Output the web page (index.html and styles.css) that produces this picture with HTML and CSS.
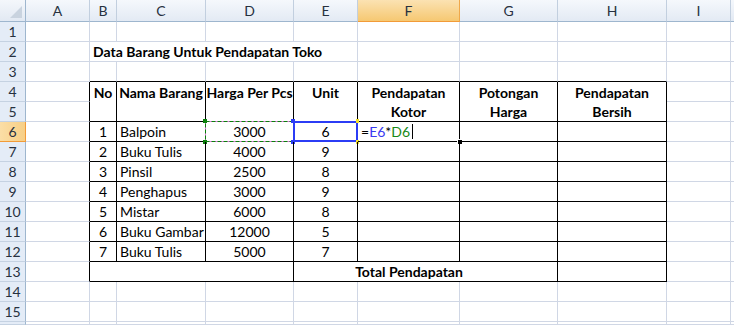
FILE: index.html
```html
<!doctype html>
<html lang="id">
<head>
<meta charset="utf-8">
<title>Data Barang Untuk Pendapatan Toko</title>
<link rel="stylesheet" href="styles.css">
</head>
<body>
<div class="sheet">
	<!-- header kolom -->
	<div class="corner"><span class="tri"></span></div>
	<div class="h">A</div><div class="h">B</div><div class="h">C</div><div class="h">D</div><div class="h">E</div>
	<div class="h sel">F</div><div class="h">G</div><div class="h">H</div><div class="h">I</div><div class="h last"></div>

	<!-- 1 -->
	<div class="rh">1</div>
	<div class="c"></div><div class="c"></div><div class="c"></div><div class="c"></div><div class="c"></div>
	<div class="c"></div><div class="c"></div><div class="c"></div><div class="c"></div><div class="c nr"></div>

	<!-- 2 -->
	<div class="rh">2</div>
	<div class="c"></div><div class="c nr b">Data Barang Untuk Pendapatan Toko</div><div class="c nr"></div><div class="c nr"></div><div class="c"></div>
	<div class="c"></div><div class="c"></div><div class="c"></div><div class="c"></div><div class="c nr"></div>

	<!-- 3 -->
	<div class="rh">3</div>
	<div class="c"></div><div class="c B"></div><div class="c B"></div><div class="c B"></div><div class="c B"></div>
	<div class="c B"></div><div class="c B"></div><div class="c B"></div><div class="c"></div><div class="c nr"></div>

	<!-- 4 -->
	<div class="rh">4</div>
	<div class="c R"></div>
	<div class="c R nb ctr b">No</div>
	<div class="c R nb ctr b">Nama Barang</div>
	<div class="c R nb ctr b">Harga Per Pcs</div>
	<div class="c R nb ctr b">Unit</div>
	<div class="c R nb ctr b">Pendapatan</div>
	<div class="c R nb ctr b">Potongan</div>
	<div class="c R nb ctr b">Pendapatan</div>
	<div class="c"></div><div class="c nr"></div>

	<!-- 5 -->
	<div class="rh">5</div>
	<div class="c R"></div>
	<div class="c R B"></div><div class="c R B"></div><div class="c R B"></div><div class="c R B"></div>
	<div class="c R B ctr b">Kotor</div>
	<div class="c R B ctr b">Harga</div>
	<div class="c R B ctr b">Bersih</div>
	<div class="c"></div><div class="c nr"></div>

	<!-- 6 -->
	<div class="rh sel">6</div>
	<div class="c R"></div>
	<div class="c R B ctr">1</div>
	<div class="c R B">Balpoin</div>
	<div class="c R B ctr">3000
		<svg class="ants" width="89" height="21"><rect x="0.5" y="0.5" width="88" height="20" fill="none" stroke="#e070e0"/><rect x="0.5" y="0.5" width="88" height="20" fill="none" stroke="#0a800a" stroke-dasharray="4 2"/></svg>
		<span class="hd green tl"></span><span class="hd green bl"></span>
	</div>
	<div class="c R B ctr">6
		<span class="ref"></span>
		<span class="hd blue tl"></span><span class="hd blue bl"></span>
		<span class="hd yellow tr"></span><span class="hd yellow br"></span>
	</div>
	<div class="c R B"><span>=</span><span class="fe">E6</span><span>*</span><span class="fd">D6</span><span class="caret"></span>
		<span class="fill"></span>
	</div>
	<div class="c R B"></div>
	<div class="c R B"></div>
	<div class="c"></div><div class="c nr"></div>

	<!-- 7 -->
	<div class="rh">7</div>
	<div class="c R"></div>
	<div class="c R B ctr">2</div><div class="c R B">Buku Tulis</div><div class="c R B ctr">4000</div><div class="c R B ctr">9</div>
	<div class="c R B"></div><div class="c R B"></div><div class="c R B"></div>
	<div class="c"></div><div class="c nr"></div>

	<!-- 8 -->
	<div class="rh">8</div>
	<div class="c R"></div>
	<div class="c R B ctr">3</div><div class="c R B">Pinsil</div><div class="c R B ctr">2500</div><div class="c R B ctr">8</div>
	<div class="c R B"></div><div class="c R B"></div><div class="c R B"></div>
	<div class="c"></div><div class="c nr"></div>

	<!-- 9 -->
	<div class="rh">9</div>
	<div class="c R"></div>
	<div class="c R B ctr">4</div><div class="c R B">Penghapus</div><div class="c R B ctr">3000</div><div class="c R B ctr">9</div>
	<div class="c R B"></div><div class="c R B"></div><div class="c R B"></div>
	<div class="c"></div><div class="c nr"></div>

	<!-- 10 -->
	<div class="rh">10</div>
	<div class="c R"></div>
	<div class="c R B ctr">5</div><div class="c R B">Mistar</div><div class="c R B ctr">6000</div><div class="c R B ctr">8</div>
	<div class="c R B"></div><div class="c R B"></div><div class="c R B"></div>
	<div class="c"></div><div class="c nr"></div>

	<!-- 11 -->
	<div class="rh">11</div>
	<div class="c R"></div>
	<div class="c R B ctr">6</div><div class="c R B">Buku Gambar</div><div class="c R B ctr">12000</div><div class="c R B ctr">5</div>
	<div class="c R B"></div><div class="c R B"></div><div class="c R B"></div>
	<div class="c"></div><div class="c nr"></div>

	<!-- 12 -->
	<div class="rh">12</div>
	<div class="c R"></div>
	<div class="c R B ctr">7</div><div class="c R B">Buku Tulis</div><div class="c R B ctr">5000</div><div class="c R B ctr">7</div>
	<div class="c R B"></div><div class="c R B"></div><div class="c R B"></div>
	<div class="c"></div><div class="c nr"></div>

	<!-- 13 -->
	<div class="rh">13</div>
	<div class="c R"></div>
	<div class="c B nr"></div><div class="c B nr"></div><div class="c R B"></div>
	<div class="c B nr"></div><div class="c B nr ctr b">Total Pendapatan</div><div class="c R B"></div><div class="c R B"></div>
	<div class="c"></div><div class="c nr"></div>

	<!-- 14 -->
	<div class="rh">14</div>
	<div class="c"></div><div class="c"></div><div class="c"></div><div class="c"></div><div class="c"></div>
	<div class="c"></div><div class="c"></div><div class="c"></div><div class="c"></div><div class="c nr"></div>

	<!-- 15 -->
	<div class="rh">15</div>
	<div class="c"></div><div class="c"></div><div class="c"></div><div class="c"></div><div class="c"></div>
	<div class="c"></div><div class="c"></div><div class="c"></div><div class="c"></div><div class="c nr"></div>

	<!-- 16 (terpotong) -->
	<div class="rh"></div>
	<div class="c"></div><div class="c"></div><div class="c"></div><div class="c"></div><div class="c"></div>
	<div class="c"></div><div class="c"></div><div class="c"></div><div class="c"></div><div class="c nr"></div>
</div>
</body>
</html>
```

FILE: styles.css
```css
*{margin: 0;padding: 0;box-sizing: border-box;}

body{
	background: #fff;
	font-family: Lato, "Liberation Sans", sans-serif;
	font-size: 14px;
	color: #000;
	overflow: hidden;
}

.sheet{
	display: grid;
	grid-template-columns: 26px 64px 27px 89px 88px 64px 102px 98px 109px 64px 3px;
	grid-template-rows: 22px repeat(15, 20px) 3px;
	width: 734px;
	height: 325px;
}

/* sel biasa */
.c{
	position: relative;
	display: flex;
	align-items: center;
	padding: 0 3px;
	white-space: nowrap;
	border-right: 1px solid #d0d7e5;
	border-bottom: 1px solid #d0d7e5;
}
.c.ctr{justify-content: center;}
.c.b{font-weight: bold;}
.c.R{border-right-color: #000;}
.c.B{border-bottom-color: #000;}
.c.nr{border-right: 0;}
.c.nb{border-bottom: 0;}

/* header */
.corner{
	position: relative;
	background: linear-gradient(#f4f7fb, #e2e9f3);
	border-right: 1px solid #9eb6ce;
	border-bottom: 1px solid #9eb6ce;
}
.corner .tri{
	position: absolute;
	right: 3px;
	bottom: 3px;
	width: 12px;
	height: 12px;
	background: #c9d3df;
	clip-path: polygon(100% 0, 100% 100%, 0 100%);
}
.h{
	display: flex;
	align-items: center;
	justify-content: center;
	color: #27313f;
	background: linear-gradient(#f5f8fc, #e3eaf4);
	border-right: 1px solid #c2cfdf;
	border-bottom: 1px solid #9eb6ce;
}
.h.last{border-right: 0;}
.rh{
	display: flex;
	align-items: center;
	justify-content: center;
	color: #27313f;
	background: #e4ecf7;
	border-right: 1px solid #9eb6ce;
	border-bottom: 1px solid #c5d2e2;
}
.h.sel{
	background: linear-gradient(#fbe2b2, #f6c872);
	border-right-color: #f0a84a;
	border-bottom-color: #f29b38;
}
.rh.sel{
	background: linear-gradient(90deg, #fbdea6, #f7cf86);
	border-bottom-color: #f29b38;
	border-right-color: #f29b38;
}

/* tanda salin / referensi rumus */
.ants{
	position: absolute;
	left: -1px;
	top: -1px;
}
.ref{
	position: absolute;
	left: -1px;
	top: -1px;
	width: 65px;
	height: 21px;
	border: 2px solid #2b3cf5;
}
.hd{
	position: absolute;
	width: 4px;
	height: 4px;
}
.hd.tl{left: -3px;top: -3px;}
.hd.bl{left: -3px;bottom: -3px;}
.hd.tr{right: -2px;top: -3px;}
.hd.br{right: -2px;bottom: -3px;}
.hd.green{background: #0a800a;}
.hd.blue{background: #2b3cf5;}
.hd.yellow{background: #f2e02c;width: 3px;}

.fe{color: #3a3af0;}
.fd{color: #178a17;}
.caret{
	display: inline-block;
	width: 1px;
	height: 15px;
	margin-left: 2px;
	background: #000;
}
.fill{
	position: absolute;
	right: -4px;
	bottom: -4px;
	width: 6px;
	height: 6px;
	background: #000;
	border: 1px solid #fff;
}
```
